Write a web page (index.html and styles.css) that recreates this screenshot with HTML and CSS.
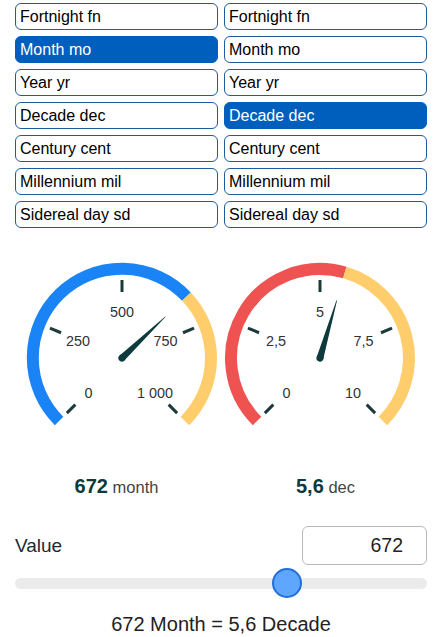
FILE: index.html
```html
<!doctype html>
<html>
 <head>
  <title>Month to Decade</title>
  <link rel="stylesheet" href="styles.css">
 </head>
 <body>
  <div class="page">
   <div class="units">
    <div class="unit-list">
     <button type="button" class="unit">Fortnight fn</button>
     <button type="button" class="unit active">Month mo</button>
     <button type="button" class="unit">Year yr</button>
     <button type="button" class="unit">Decade dec</button>
     <button type="button" class="unit">Century cent</button>
     <button type="button" class="unit">Millennium mil</button>
     <button type="button" class="unit">Sidereal day sd</button>
    </div>
    <div class="unit-list">
     <button type="button" class="unit">Fortnight fn</button>
     <button type="button" class="unit">Month mo</button>
     <button type="button" class="unit">Year yr</button>
     <button type="button" class="unit active">Decade dec</button>
     <button type="button" class="unit">Century cent</button>
     <button type="button" class="unit">Millennium mil</button>
     <button type="button" class="unit">Sidereal day sd</button>
    </div>
   </div>

   <div class="gauges">
    <div class="gauge">
     <svg class="dial" viewBox="-107 -108 203 200">
      <path class="arc arc-blue" d="M -62.93 62.93 A 89 89 0 1 1 64.45 -61.37"/>
      <path class="arc arc-yellow" d="M 64.45 -61.37 A 89 89 0 0 1 62.93 62.93"/>
      <line class="tick" x1="-46.67" y1="46.67" x2="-55.15" y2="55.15"/>
      <line class="tick" x1="-60.98" y1="-25.26" x2="-72.06" y2="-29.85"/>
      <line class="tick" x1="0" y1="-66" x2="0" y2="-78"/>
      <line class="tick" x1="60.98" y1="-25.26" x2="72.06" y2="-29.85"/>
      <line class="tick" x1="46.67" y1="46.67" x2="55.15" y2="55.15"/>
      <text class="label" x="-33.5" y="35">0</text>
      <text class="label" x="-44" y="-17">250</text>
      <text class="label" x="0" y="-46">500</text>
      <text class="label" x="43.5" y="-17">750</text>
      <text class="label" x="33" y="35">1 000</text>
      <g class="needle" transform="rotate(46.4)">
       <path d="M -3.4 0 L -0.3 -60 L 0.3 -60 L 3.4 0 Z"/>
       <circle r="3.6"/>
      </g>
     </svg>
     <div class="readout"><b>672</b> month</div>
    </div>
    <div class="gauge">
     <svg class="dial" viewBox="-96 -108 203 200">
      <path class="arc arc-red" d="M -62.93 62.93 A 89 89 0 0 1 24.83 -85.46"/>
      <path class="arc arc-yellow" d="M 24.83 -85.46 A 89 89 0 0 1 62.93 62.93"/>
      <line class="tick" x1="-46.67" y1="46.67" x2="-55.15" y2="55.15"/>
      <line class="tick" x1="-60.98" y1="-25.26" x2="-72.06" y2="-29.85"/>
      <line class="tick" x1="0" y1="-66" x2="0" y2="-78"/>
      <line class="tick" x1="60.98" y1="-25.26" x2="72.06" y2="-29.85"/>
      <line class="tick" x1="46.67" y1="46.67" x2="55.15" y2="55.15"/>
      <text class="label" x="-33.5" y="35">0</text>
      <text class="label" x="-44" y="-17">2,5</text>
      <text class="label" x="0" y="-46">5</text>
      <text class="label" x="43.5" y="-17">7,5</text>
      <text class="label" x="33" y="35">10</text>
      <g class="needle" transform="rotate(16.2)">
       <path d="M -3.4 0 L -0.3 -60 L 0.3 -60 L 3.4 0 Z"/>
       <circle r="3.6"/>
      </g>
     </svg>
     <div class="readout"><b>5,6</b> dec</div>
    </div>
   </div>

   <div class="value-row">
    <label for="value-input" class="value-label">Value</label>
    <input type="text" id="value-input" class="value-input" value="672">
   </div>
   <input type="range" class="slider" min="0" max="1000" value="672">
   <p class="result">672 Month = 5,6 Decade</p>
  </div>
 </body>
</html>
```

FILE: styles.css
```css
body {
  margin: 0;
  background-color: #fff;
  font-family: "Liberation Sans", Arial, sans-serif;
  color: #222;
}

.page {
  padding: 3px 11px 0 15px;
}

.units {
  display: grid;
  grid-template-columns: 1fr 1fr;
  column-gap: 6px;
}

.unit-list {
  display: flex;
  flex-direction: column;
  gap: 6px;
}

.unit {
  height: 27px;
  padding: 0 4px;
  border: 1px solid #1f5c9e;
  border-radius: 6px;
  background-color: #fff;
  color: #000;
  font-family: "Liberation Sans", Arial, sans-serif;
  font-size: 16px;
  text-align: left;
  cursor: pointer;
}

.unit.active {
  background-color: #005fbd;
  border-color: #005fbd;
  color: #fff;
}

.gauges {
  display: grid;
  grid-template-columns: 1fr 1fr;
  column-gap: 6px;
  margin-top: 22px;
}

.dial {
  display: block;
  width: 203px;
  height: 200px;
}

.arc {
  fill: none;
  stroke-width: 12;
}

.arc-blue {
  stroke: #1a83f6;
}

.arc-yellow {
  stroke: #ffcd6c;
}

.arc-red {
  stroke: #ee5352;
}

.tick {
  stroke: #1d3a3b;
  stroke-width: 3;
}

.label {
  fill: #333;
  font-size: 14.4px;
  text-anchor: middle;
  dominant-baseline: central;
}

.needle {
  fill: #0e3a3d;
}

.readout {
  margin-top: 24px;
  text-align: center;
  line-height: 24px;
  font-size: 16.5px;
  color: #444;
}

.readout b {
  font-size: 20px;
  color: #0d3a3c;
}

.value-row {
  display: flex;
  justify-content: space-between;
  align-items: center;
  margin-top: 27px;
}

.value-label {
  font-size: 19px;
  color: #1b2a36;
}

.value-input {
  box-sizing: border-box;
  width: 125px;
  height: 39px;
  margin: 0;
  padding: 0 23px 0 8px;
  border: 1px solid #b8b8b8;
  border-radius: 6px;
  font-family: "Liberation Sans", Arial, sans-serif;
  font-size: 19.5px;
  color: #222;
  text-align: right;
}

.slider {
  -webkit-appearance: none;
  appearance: none;
  display: block;
  width: 100%;
  height: 30px;
  margin: 3px 0 0;
  background: transparent;
}

.slider::-webkit-slider-runnable-track {
  height: 11px;
  border-radius: 6px;
  background-color: #ebebeb;
}

.slider::-webkit-slider-thumb {
  -webkit-appearance: none;
  box-sizing: border-box;
  width: 30px;
  height: 30px;
  margin-top: -10px;
  border: 2px solid #1f6fd6;
  border-radius: 50%;
  background-color: #5ea6ff;
}

.result {
  margin: 14px 0 0;
  text-align: center;
  line-height: 24px;
  font-size: 20px;
  color: #222;
}
```
